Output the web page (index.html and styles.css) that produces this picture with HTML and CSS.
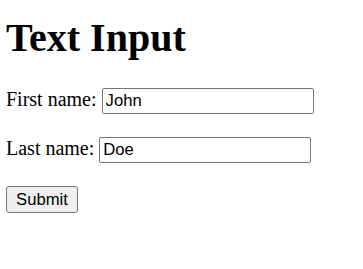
FILE: index.html
```html
<!DOCTYPE html>
<html>
  <head>
    <meta charset="utf-8" />
    <link rel="stylesheet" href="styles.css">
  </head>
  <body>
    <h1>Text Input</h1>
    <form>
      <label for="fname">First name:</label>
      <input type="text" id="fname" name="fname" value="John"><br><br>
      <label for="lname">Last name:</label>
      <input type="text" id="lname" name="lname" value="Doe"><br><br>
      <input type="submit" value="Submit">
    </form>
  </body>
</html>
```

FILE: styles.css
```css
body {
  margin: 0 6px;
  font-family: "Liberation Serif", serif;
  font-size: 20px;
  color: #000;
}
h1 {
  font-size: 40px;
  margin: 14px 0 27px;
}
input {
  font-family: "Liberation Sans", sans-serif;
  font-size: 16.67px;
  color: #000;
  box-sizing: border-box;
}
input[type="text"] {
  width: 212px;
  height: 26px;
  padding: 1px 3px;
  border: 1px solid #767676;
  border-radius: 2px;
  background: #fff;
}
input[type="submit"] {
  width: 72px;
  height: 27px;
  padding: 0;
  border: 1px solid #767676;
  border-radius: 3px;
  background: #efefef;
}
```
